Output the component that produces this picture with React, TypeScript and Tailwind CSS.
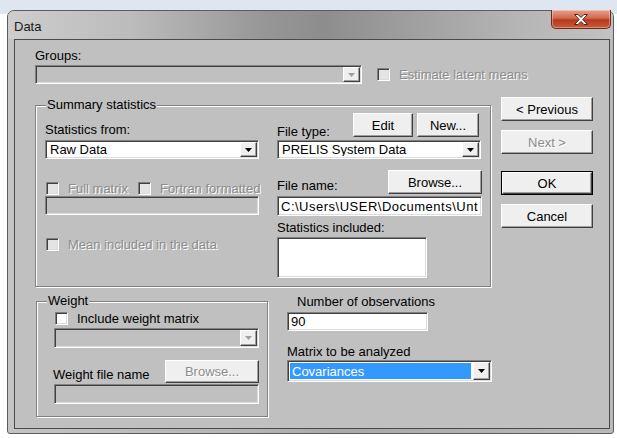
import React from 'react';

const face =
  'bg-[#efefef] border border-t-white border-l-white border-r-[#404040] border-b-[#404040] shadow-[inset_-1px_-1px_0_#a0a0a0]';
const sunken =
  'border border-t-[#808080] border-l-[#808080] border-r-white border-b-white shadow-[inset_1px_1px_0_#404040,inset_-1px_-1px_0_#dcdcdc]';
const etched = 'text-[#8c8c8c] [text-shadow:1px_1px_0_#ffffff]';

function Btn({
  label,
  className = '',
  disabled,
  isDefault,
}: {
  label: string;
  className?: string;
  disabled?: boolean;
  isDefault?: boolean;
}) {
  const inner = (
    <div className={`${face} flex-1 flex items-center justify-center ${disabled ? etched : ''}`}>
      {label}
    </div>
  );
  if (isDefault) {
    return <div className={`border border-black flex shrink-0 ${className}`}>{inner}</div>;
  }
  return <div className={`flex shrink-0 ${className}`}>{inner}</div>;
}

function Select({
  value = '',
  className = '',
  disabled,
  selected,
}: {
  value?: string;
  className?: string;
  disabled?: boolean;
  selected?: boolean;
}) {
  return (
    <div
      className={`${sunken} flex shrink-0 items-stretch p-[1px] ${disabled ? 'bg-[#c0c0c0]' : 'bg-white'} ${className}`}
    >
      <div className="flex-1 flex items-stretch p-[1px] min-w-0">
        <div
          className={`flex-1 flex items-center pl-[2px] overflow-hidden ${
            selected ? 'bg-[#3399ff] text-white mr-[1px]' : ''
          }`}
        >
          {value}
        </div>
      </div>
      <div className={`${face} w-[17px] flex items-center justify-center`}>
        <svg width="8" height="4" viewBox="0 0 8 4">
          <path d="M0 0h7L3.5 4z" fill={disabled ? '#a0a0a0' : '#000000'} />
        </svg>
      </div>
    </div>
  );
}

function Field({
  value = '',
  className = '',
  disabled,
}: {
  value?: string;
  className?: string;
  disabled?: boolean;
}) {
  return (
    <div
      className={`${sunken} flex shrink-0 items-center pl-[3px] overflow-hidden ${
        disabled ? 'bg-[#c0c0c0]' : 'bg-white'
      } ${className}`}
    >
      {value}
    </div>
  );
}

function Check({ disabled }: { disabled?: boolean }) {
  return (
    <div className={`w-[13px] h-[13px] shrink-0 ${sunken} ${disabled ? 'bg-[#e4e4e4]' : 'bg-white'}`} />
  );
}

function GroupBox({
  label,
  className = '',
  children,
}: {
  label: string;
  className?: string;
  children: React.ReactNode;
}) {
  return (
    <div
      className={`relative shrink-0 border border-[#808080] shadow-[1px_1px_0_#ffffff,inset_1px_1px_0_#ffffff] ${className}`}
    >
      <span className="absolute -top-[9px] left-[10px] bg-[#c0c0c0] px-[1px]">{label}</span>
      {children}
    </div>
  );
}

export default function App() {
  return (
    <div className="w-[617px] h-[438px] overflow-hidden whitespace-nowrap bg-[linear-gradient(#dde6f1_0px,#dde6f1_14px,#ffffff_14px)] pt-[10px] font-['Liberation_Sans',Arial,sans-serif] text-[13px] leading-[15px] text-black">
      <div className="ml-[7px] w-[607px] h-[424px] rounded-t-[7px] rounded-b-[3px] border border-[#5c5c5c] bg-[linear-gradient(90deg,#c4c4c4,#b4b4b4_40%,#a9a9a9_55%,#b9b9b9)] flex flex-col">
        {/* Title bar */}
        <div className="h-[28px] flex items-start rounded-t-[6px] bg-[linear-gradient(90deg,#cdcdcd_0%,#bcbcbc_20%,#979797_42%,#8d8d8d_52%,#a3a3a3_70%,#b6b6b6_85%,#c2c2c2_100%)]">
          <span className="ml-[6px] mt-[8px] text-[13px] text-[#1a1a1a]">Data</span>
          <div className="ml-auto mr-[2px] -mt-[1px] w-[60px] h-[19px] rounded-b-[5px] border border-[#6b2a1c] border-t-0 bg-[linear-gradient(#e9a08c,#d06a50_45%,#b8391c_55%,#c85a38)] flex items-center justify-center shadow-[inset_0_0_0_1px_rgba(255,255,255,0.35)]">
            <svg width="16" height="11" viewBox="0 0 16 11">
              <path
                d="M1.5 0.5h3.5l3 3 3-3h3.5l-4.7 5 4.7 5h-3.5l-3-3-3 3h-3.5l4.7-5z"
                fill="#ffffff"
                stroke="#5a2418"
                strokeWidth="1"
                strokeLinejoin="round"
              />
            </svg>
          </div>
        </div>

        {/* Client area */}
        <div className="ml-[6px] w-[596px] h-[390px] border border-[#4a4a4a] bg-[#c0c0c0] flex">
          {/* Left column */}
          <div className="ml-[20px] w-[456px] shrink-0 flex flex-col">
            <div className="mt-[8px]">Groups:</div>
            <div className="mt-[2px] h-[19px] flex items-center">
              <Select disabled className="w-[327px] h-[19px]" />
              <div className="ml-[15px]">
                <Check disabled />
              </div>
              <span className={`ml-[9px] ${etched}`}>Estimate latent means</span>
            </div>

            {/* Summary statistics */}
            <GroupBox label="Summary statistics" className="mt-[21px] w-[456px] h-[182px] flex items-start">
              <div className="ml-[9px] mt-[16px] w-[214px] shrink-0 flex flex-col">
                <div>Statistics from:</div>
                <Select value="Raw Data" className="mt-[3px] h-[19px]" />
                <div className="mt-[23px] h-[13px] flex items-center">
                  <div className="ml-[1px]">
                    <Check disabled />
                  </div>
                  <span className={`ml-[9px] ${etched}`}>Full matrix</span>
                  <div className="ml-[10px]">
                    <Check disabled />
                  </div>
                  <span className={`ml-[9px] ${etched}`}>Fortran formatted</span>
                </div>
                <Field disabled className="mt-[1px] h-[19px]" />
                <div className="mt-[23px] h-[13px] flex items-center">
                  <div className="ml-[1px]">
                    <Check disabled />
                  </div>
                  <span className={`ml-[9px] ${etched}`}>Mean included in the data</span>
                </div>
              </div>

              <div className="ml-[18px] mt-[7px] w-[205px] shrink-0 flex flex-col">
                <div className="h-[24px] flex items-start">
                  <span className="w-[76px] shrink-0 mt-[11px]">File type:</span>
                  <Btn label="Edit" className="w-[60px] h-[24px]" />
                  <Btn label="New..." className="ml-[4px] w-[62px] h-[24px]" />
                </div>
                <Select value="PRELIS System Data" className="mt-[3px] w-[204px] h-[19px]" />
                <div className="mt-[11px] h-[24px] flex items-start">
                  <span className="w-[111px] shrink-0 mt-[8px]">File name:</span>
                  <Btn label="Browse..." className="w-[94px] h-[24px]" />
                </div>
                <Field
                  value="C:\Users\USER\Documents\Unt"
                  className="mt-[2px] h-[20px] w-[205px] tracking-[0.5px]"
                />
                <div className="mt-[4px]">Statistics included:</div>
                <Field className="mt-[2px] w-[150px] h-[41px]" />
              </div>
            </GroupBox>

            {/* Bottom row */}
            <div className="mt-[7px] flex items-start">
              <GroupBox label="Weight" className="ml-[1px] mt-[7px] w-[232px] h-[116px] flex flex-col">
                <div className="mt-[10px] h-[13px] flex items-center">
                  <div className="ml-[18px]">
                    <Check />
                  </div>
                  <span className="ml-[9px]">Include weight matrix</span>
                </div>
                <Select disabled className="mt-[3px] ml-[17px] w-[205px] h-[20px]" />
                <div className="mt-[12px] h-[23px] flex items-start">
                  <span className="ml-[16px] w-[112px] shrink-0 mt-[7px]">Weight file name</span>
                  <Btn label="Browse..." disabled className="w-[94px] h-[23px]" />
                </div>
                <Field disabled className="mt-[1px] ml-[17px] w-[205px] h-[20px]" />
              </GroupBox>

              <div className="ml-[19px] shrink-0 flex flex-col">
                <div className="pl-[10px]">Number of observations</div>
                <Field value="90" className="mt-[3px] w-[141px] h-[19px]" />
                <div className="mt-[13px]">Matrix to be analyzed</div>
                <Select value="Covariances" selected className="mt-[1px] w-[205px] h-[22px]" />
              </div>
            </div>
          </div>

          {/* Right buttons */}
          <div className="ml-[10px] mt-[57px] w-[92px] shrink-0 flex flex-col">
            <Btn label="< Previous" className="h-[24px]" />
            <Btn label="Next >" disabled className="mt-[9px] h-[24px]" />
            <Btn label="OK" isDefault className="mt-[17px] h-[24px]" />
            <Btn label="Cancel" className="mt-[9px] h-[24px]" />
          </div>
        </div>
      </div>
    </div>
  );
}
